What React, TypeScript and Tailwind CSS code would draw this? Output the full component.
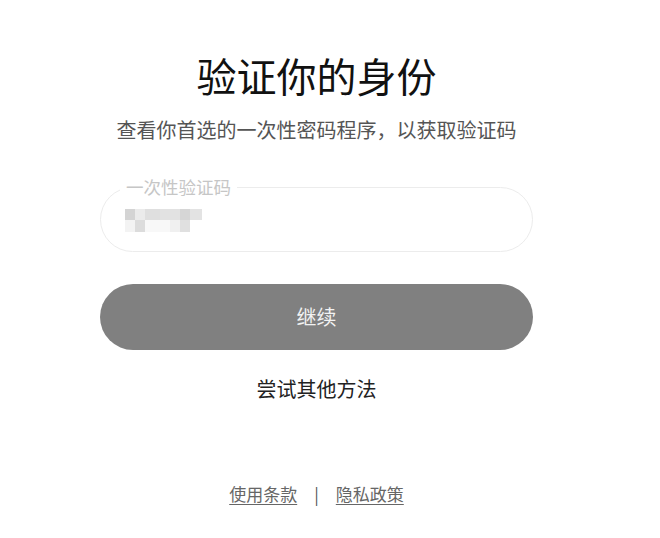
export default function App() {
  // pixelated (masked) code value: [width, colour] per cell
  const rowA: [number, string][] = [
    [10, '#d4d4d4'],
    [10, '#ebebeb'],
    [15, '#dfdfdf'],
    [20, '#e2e2e2'],
    [10, '#d6d6d6'],
    [12, '#e3e3e3'],
  ];
  const rowB: [number, string][] = [
    [10, '#f3f3f3'],
    [10, '#dcdcdc'],
    [25, '#f8f8f8'],
    [10, '#f0f0f0'],
    [10, '#e0e0e0'],
    [12, '#ffffff'],
  ];

  return (
    <div className="min-h-[538px] bg-white font-['Noto_Sans_CJK_SC','Noto_Sans',sans-serif]">
      <div className="ml-[100px] flex w-[433px] flex-col items-center pt-[51px]">
        <h1 className="text-[40px] leading-[48px] font-normal text-[#111111]">验证你的身份</h1>
        <p className="mt-[17px] text-[20px] leading-[28px] text-[#555555]">
          查看你首选的一次性密码程序，以获取验证码
        </p>

        <div className="relative mt-[43px] flex h-[65px] w-full items-center rounded-full border border-[#ececec] pl-[24px] pt-[2px]">
          <span className="absolute -top-[11px] left-[19px] bg-white px-[6px] text-[17.5px] leading-[20px] text-[#c6c6c6]">
            一次性验证码
          </span>
          <div className="flex flex-col">
            <div className="flex h-[11px]">
              {rowA.map(([w, c], i) => (
                <div key={i} className="h-full" style={{ width: w, background: c }} />
              ))}
            </div>
            <div className="flex h-[12px]">
              {rowB.map(([w, c], i) => (
                <div key={i} className="h-full" style={{ width: w, background: c }} />
              ))}
            </div>
          </div>
        </div>

        <button className="mt-[32px] flex h-[66px] w-full items-center justify-center rounded-full bg-[#808080] text-[20px] text-[#f2f2f2]">
          继续
        </button>

        <button className="mt-[25px] text-[20px] leading-[28px] text-[#222222]">尝试其他方法</button>

        <div className="mt-[79px] flex items-center gap-[17px] text-[17px] leading-[24px] text-[#666666]">
          <a className="underline underline-offset-[3px]">使用条款</a>
          <span className="text-[#555555]">|</span>
          <a className="underline underline-offset-[3px]">隐私政策</a>
        </div>
      </div>
    </div>
  );
}
